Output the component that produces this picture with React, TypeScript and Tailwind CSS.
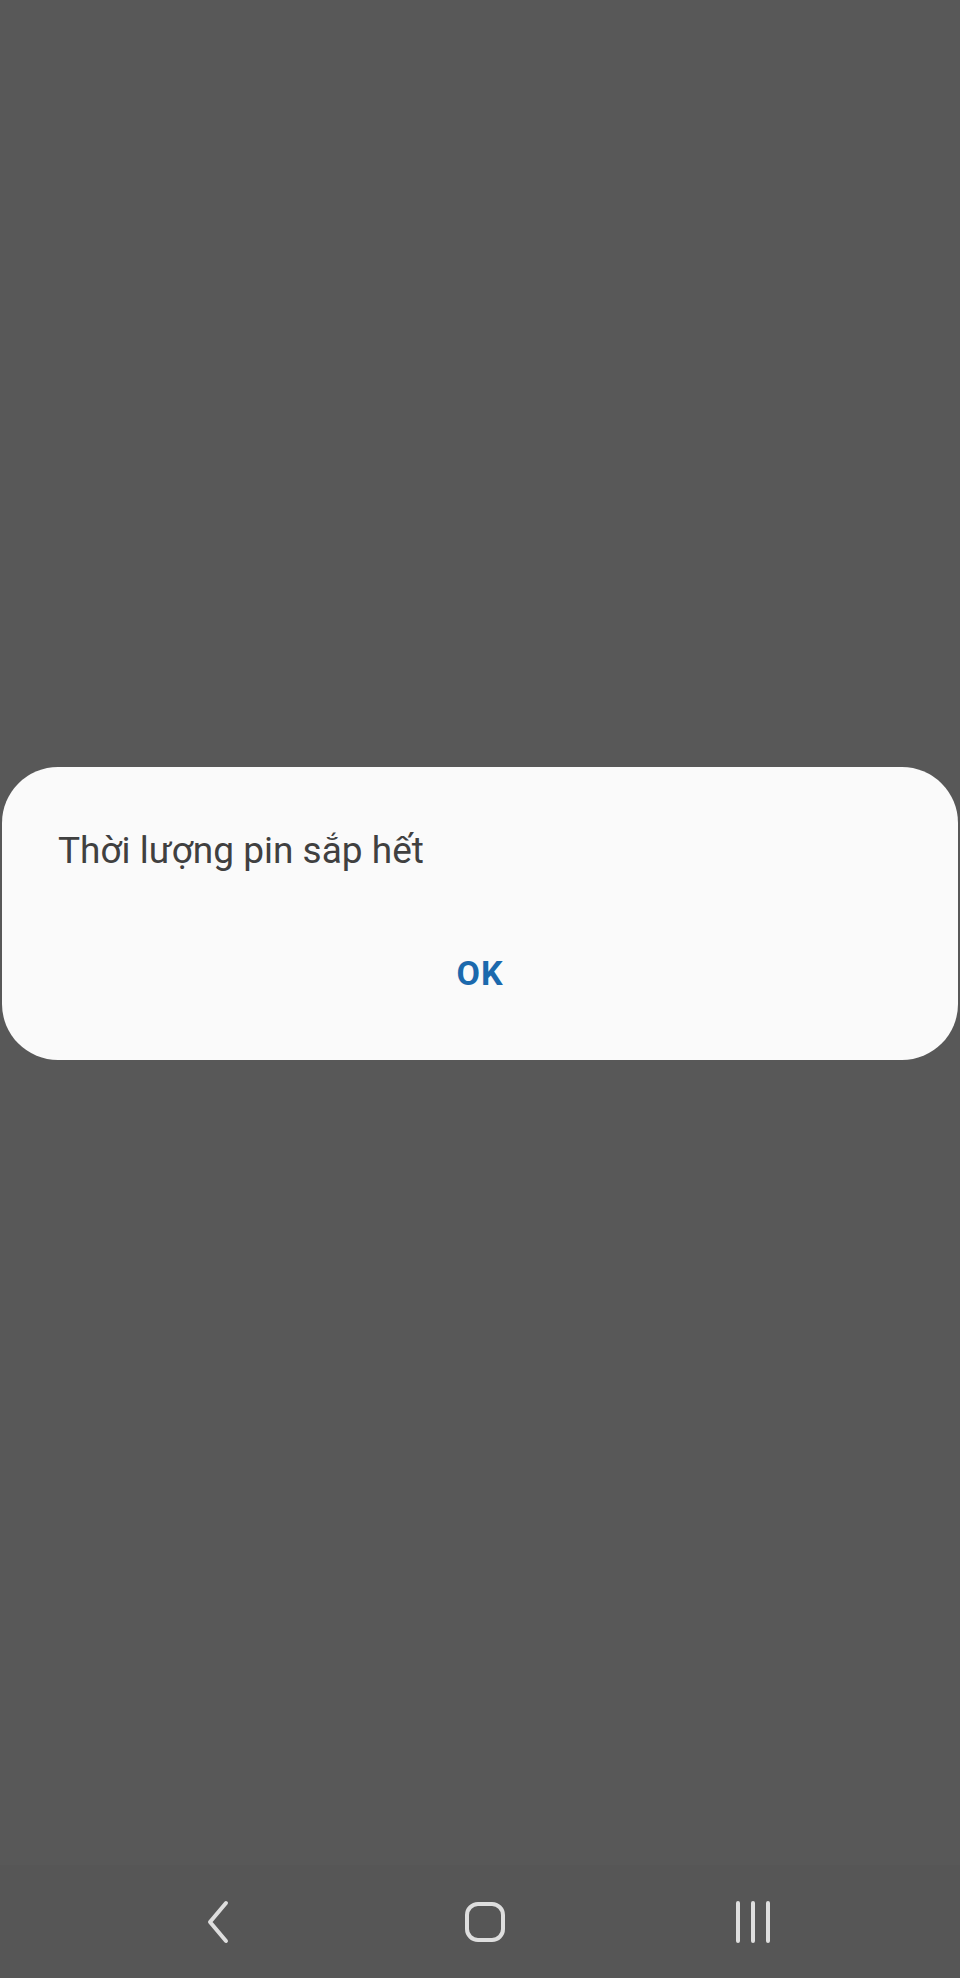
import React from "react";

export default function App() {
  return (
    <div className="w-[960px] h-[1978px] flex flex-col bg-[#585858]" style={{ fontFamily: "Roboto, 'Noto Sans', sans-serif" }}>
      <div className="flex-1 pt-[767px]">
        <div className="mx-[2px] h-[293px] bg-[#fafafa] rounded-[56px] flex flex-col">
          <div className="pl-[56px] pt-[62px] text-[37px] leading-[44px] text-[#404040]">Thời lượng pin sắp hết</div>
          <div className="flex justify-center pt-[80px]">
            <span className="text-[34px] leading-[40px] font-bold tracking-[1px] text-[#1b69ad]">OK</span>
          </div>
        </div>
      </div>
      <div className="h-[113px] bg-[#565656] flex items-center pl-[187px] gap-[208px]">
        <div className="w-[60px] flex justify-center">
          <svg width="28" height="46" viewBox="0 0 28 46">
            <path d="M23 4 L7 23 L23 42" stroke="#dedede" strokeWidth="4" fill="none" strokeLinecap="round" strokeLinejoin="round" />
          </svg>
        </div>
        <div className="w-[60px] flex justify-center">
          <svg width="44" height="44" viewBox="0 0 44 44">
            <rect x="4" y="4" width="36" height="36" rx="11" stroke="#dedede" strokeWidth="4" fill="none" />
          </svg>
        </div>
        <div className="w-[60px] flex justify-center">
          <svg width="42" height="46" viewBox="0 0 42 46">
            <path d="M6 4 V42 M21 4 V42 M36 4 V42" stroke="#dedede" strokeWidth="4" fill="none" strokeLinecap="round" />
          </svg>
        </div>
      </div>
    </div>
  );
}
